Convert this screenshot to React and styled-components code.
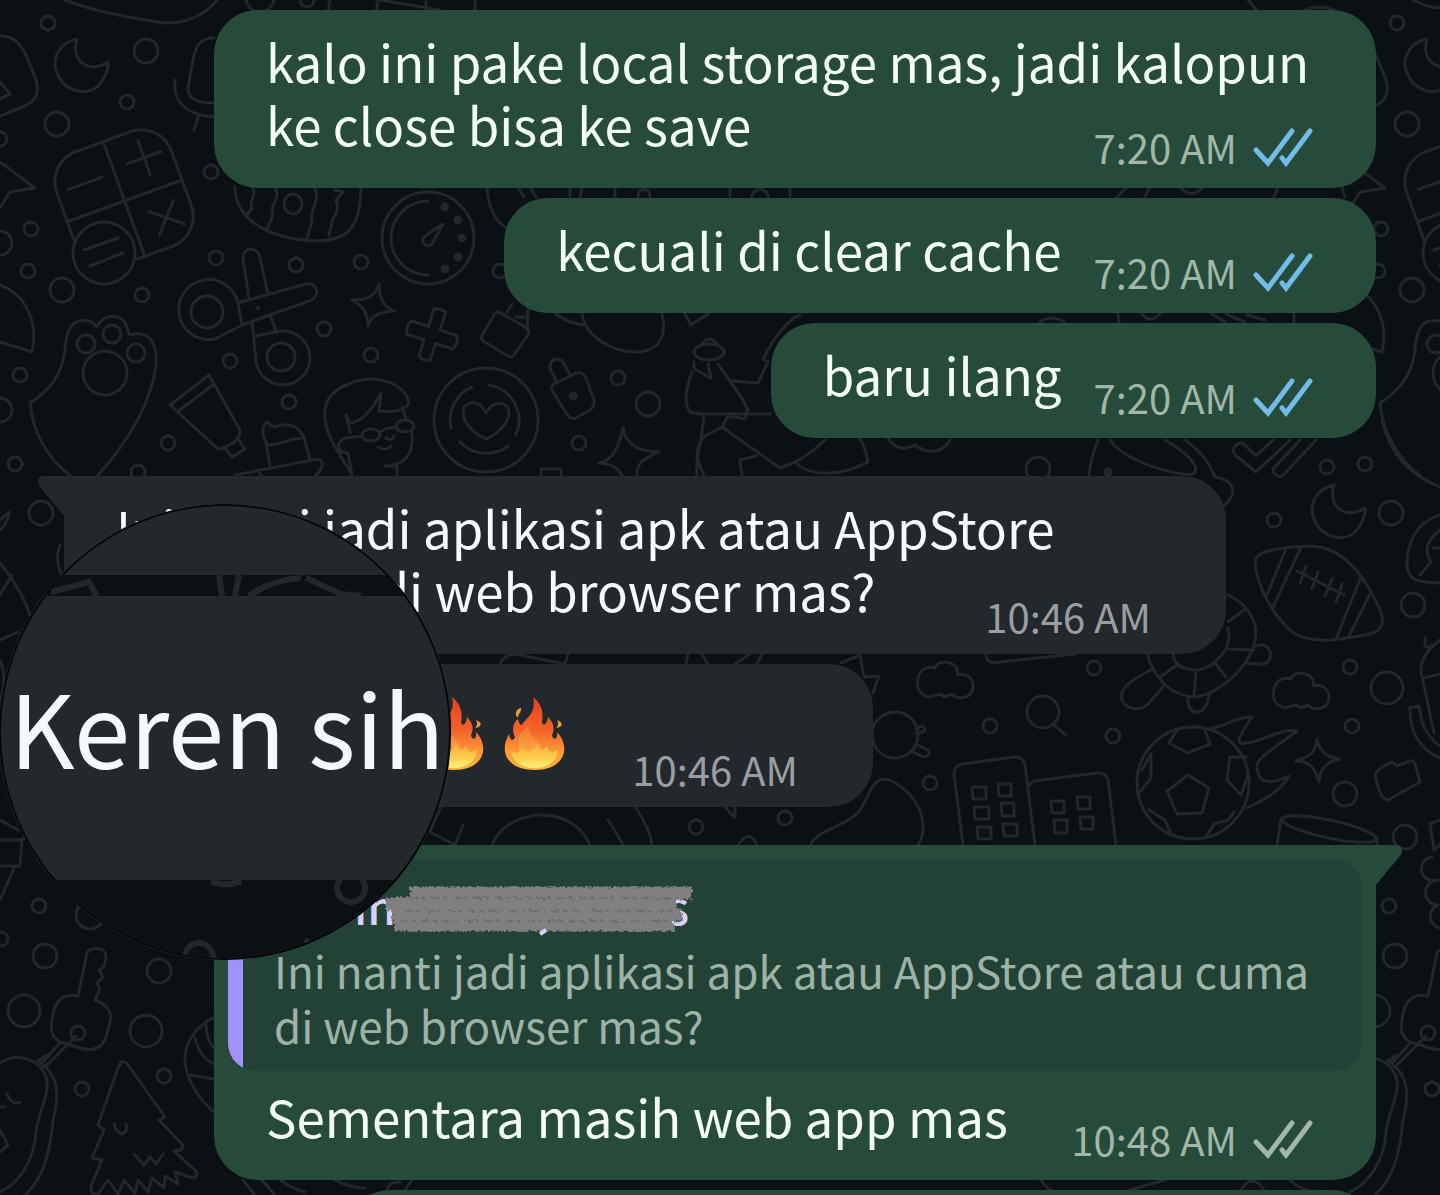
import React from "react";
import styled, { createGlobalStyle, css } from "styled-components";

const GlobalStyle = createGlobalStyle`
  * {
    box-sizing: border-box;
  }
  body {
    margin: 0;
    background: #0b1014;
    font-family: "Noto Sans CJK SC", "Noto Sans", sans-serif;
  }
`;

const Chat = styled.main`
  position: relative;
  height: 100vh;
  overflow: hidden;
  background: #0b1014;
`;

const Wallpaper = styled.svg`
  position: absolute;
  inset: 0;
  width: 100%;
  height: 100%;
  fill: none;
  stroke: #22272b;
  stroke-width: 3;
  stroke-linecap: round;
  stroke-linejoin: round;
`;

const Messages = styled.div`
  position: relative;
  display: flex;
  flex-direction: column;
  gap: 38px;
  padding: 10px 64px;
`;

const Group = styled.section`
  display: flex;
  flex-direction: column;
  align-items: ${(props) => (props.$mine ? "flex-end" : "flex-start")};
  gap: 10px;
`;

const Bubble = styled.article`
  position: relative;
  width: ${(props) => (props.$wide ? "1162px" : "auto")};
  max-width: 100%;
  border-radius: 44px;
  color: #f4fff8;
  background: #264b3a;

  ${(props) =>
    props.$incoming &&
    css`
      color: #f7faff;
      background: #23282c;
    `}
  ${(props) => props.$tail === "left" && "border-top-left-radius: 0;"}
  ${(props) => props.$tail === "right" && "border-top-right-radius: 0;"}
`;

// only the top edge of this one is in view
const NextBubble = styled(Bubble)`
  width: 1030px;
  height: 116px;
`;

const Tail = styled.svg`
  position: absolute;
  top: 0;
  width: 27px;
  height: 41px;
  ${(props) =>
    props.$side === "left"
      ? "right: 100%; margin-right: -1px; fill: #23282c;"
      : "left: 100%; margin-left: -1px; fill: #264b3a;"}
`;

const Body = styled.div`
  display: flex;
  flex-direction: column;
  align-items: flex-start;
  padding: ${(props) => (props.$incoming ? "20px 75px 18px 52px" : "20px 63px 21px 52px")};
  ${(props) => props.$afterQuote && "padding-top: 14px;"}
`;

const Line = styled.span`
  font-size: 51px;
  line-height: 63px;
  white-space: nowrap;
`;

const LastRow = styled.div`
  align-self: stretch;
  display: flex;
  align-items: flex-end;
  justify-content: space-between;
  gap: 32px;

  > ${Line} {
    margin-bottom: ${(props) => (props.$incoming ? 14 : 11)}px;
  }
`;

const Meta = styled.div`
  display: flex;
  align-items: center;
  gap: 16px;
  font-size: 40px;
  line-height: 40px;
  white-space: nowrap;
  color: ${(props) => (props.$incoming ? "#9b9ea1" : "#a2b6aa")};
`;

const Ticks = styled.svg`
  width: 60px;
  height: 40px;
  fill: none;
  stroke: ${(props) => (props.$read ? "#74bce8" : "#a2b6aa")};
  stroke-width: 5;
  stroke-linecap: round;
`;

const Fires = styled.div`
  flex: 1;
  display: flex;
  justify-content: flex-end;
  align-items: center;
  gap: 20px;
  height: 105px;
  padding: 0 35px 8px 0;
`;

const FireIcon = styled.svg`
  width: 61px;
  height: 74px;
`;

const Quote = styled.blockquote`
  margin: 0 14px;
  padding: 24px 28px 18px 46px;
  border-radius: 28px;
  background: linear-gradient(to right, #a391fb 15px, #234236 15px);
  color: #9db3a7;
  font-size: 44px;
  line-height: 55px;
  white-space: nowrap;
`;

const QuotedMessage = styled.div`
  padding-top: 14px;
`;

const QuoteName = styled.div`
  position: relative;
  display: flex;
  justify-content: space-between;
  width: 335px;
  margin: 0 0 15px 80px;
  font-size: 46px;
  font-weight: 500;
  line-height: 45px;
  color: #d9d0ff;
`;

const Scribble = styled.svg`
  position: absolute;
  left: 26px;
  top: -4px;
  width: 316px;
  height: 60px;
  fill: none;
  stroke: #808080;
`;

const QuoteText = styled.p`
  margin: 0;
`;

const LensRow = styled.div`
  position: relative;
  z-index: 1;
  display: flex;
  width: 809px;
  max-width: 100%;

  > article {
    flex: 1;
  }
`;

const Lens = styled.div`
  position: absolute;
  left: -65px;
  top: -160px;
  display: flex;
  align-items: center;
  justify-content: center;
  width: 452px;
  height: 456px;
  border: 2px solid #050709;
  border-radius: 50%;
  overflow: hidden;
  background: #23282c;
  box-shadow: 0 0 1px #50565b;
`;

const LensArt = styled.svg`
  position: absolute;
  inset: 0;
  width: 448px;
  height: 452px;
  fill: none;
  stroke: #22272b;
  stroke-width: 6;
`;

const LensText = styled.span`
  position: relative;
  padding: 0 0 14px 4px;
  font-size: 101px;
  line-height: 120px;
  white-space: nowrap;
  color: #f5f8fd;
`;

const dots = [
  // small rings
  [48, 23, 7], [127, 102, 7], [211, 172, 7], [216, 258, 7], [296, 265, 7],
  [361, 262, 7], [31, 229, 7], [28, 271, 7], [142, 295, 7], [324, 329, 7],
  [230, 361, 7], [371, 355, 7], [289, 402, 7], [20, 375, 7], [168, 443, 7],
  [15, 464, 7], [138, 472, 7], [0, 139, 7], [307, 0, 7], [500, 271, 7],
  [618, 378, 7], [579, 443, 7], [1274, 520, 7], [1327, 467, 7], [1365, 464, 7],
  [1350, 667, 7], [1352, 726, 7], [1094, 668, 7], [990, 726, 7], [1113, 736, 7],
  [930, 783, 7], [696, 827, 7], [785, 818, 7], [39, 906, 7], [1, 939, 7],
  [82, 1089, 7], [164, 1076, 7], [1389, 906, 7], [1432, 1089, 7],
  // larger rings
  [146, 51, 12], [57, 124, 12], [62, 290, 12], [0, 243, 12], [0, 410, 12],
  [260, -2, 14], [648, 404, 12], [41, 513, 12], [1038, 469, 12],
  [1391, 513, 12], [1413, 605, 12], [1387, 688, 16], [1345, 794, 12],
  [1405, 837, 12], [45, 956, 12], [159, 971, 12],
  [24, 1011, 16], [146, 1031, 16], [90, 915, 14], [1395, 956, 12],
  [1374, 1011, 16],
];

const Moon = (props) => (
  <path
    d="M77 39C60 42 52 58 56 70C62 91 86 98 99 85C105 78 109 68 108 62C90 74 70 62 77 39Z"
    {...props}
  />
);

const LeftDoodles = (props) => (
  <g {...props}>
    <Moon />
    <path d="M0 36C15 36 22 45 28 60L36 80C40 95 35 102 22 107L0 116M0 82L10 94L0 99" />
    <path d="M0 162L35 188L10 192L0 208" />
    <g transform="translate(124 199) rotate(-20)">
      <rect x="-61" y="-61" width="122" height="122" rx="32" />
      <path d="M0-61V61M-61 2H61M-49-28H-13M15-32H51M33-50V-14M19 20L48 44M46 18L21 46" />
    </g>
    <circle cx="104" cy="253" r="31" fill="#0b1014" />
    <path d="M84 250L118 238M90 266L123 253" />
    <path d="M0 285C20 292 40 316 32 352L0 342" />
    <path d="M30 403C50 390 62 375 65 350C66 330 72 318 88 321C96 322 95 329 98 325C104 315 120 312 126 325C130 332 126 336 134 334C150 332 158 345 156 365C152 400 130 440 98 475M30 403C32 430 48 460 70 475" />
    <circle cx="86" cy="344" r="9" />
    <circle cx="112" cy="334" r="9" />
    <circle cx="136" cy="353" r="9" />
    <circle cx="105" cy="373" r="22" />
  </g>
);

const KeyDoodles = (props) => (
  <g {...props}>
    <path d="M78 996L87 953C90 946 107 947 106 958L104 967L99 970L103 977L97 983L100 989L95 1000C106 1004 113 1012 110 1022L106 1037C102 1050 90 1051 80 1048L60 1042C50 1036 50 1028 53 1014C56 999 65 993 78 996Z" />
    <circle cx="78" cy="1033" r="7" />
    <path d="M76 1036L45 1067L38 1060M60 1043L43 1062M38 1062L46 1055" />
    <path d="M0 1063C14 1054 34 1056 44 1072C54 1090 38 1110 36 1132C34 1162 18 1184 0 1192M46 1067C60 1082 58 1100 53 1120C50 1150 45 1177 25 1195M7 1094Q12 1106 20 1102M0 1130L8 1145L0 1152M0 1107H5" />
  </g>
);

const Doodles = () => (
  <Wallpaper
    viewBox="0 0 1440 1195"
    preserveAspectRatio="xMidYMin slice"
    aria-hidden="true"
  >
    {dots.map(([x, y, r], index) => (
      <circle key={index} cx={x} cy={y} r={r} />
    ))}
    <LeftDoodles />
    <LeftDoodles transform="translate(1350 0)" />
    <circle cx="1397" cy="23" r="7" />
    <circle cx="1407" cy="124" r="12" />
    <circle cx="1412" cy="290" r="12" />
    <circle cx="1381" cy="229" r="7" />
    <circle cx="1378" cy="271" r="7" />

    {/* top edge */}
    <path d="M65 0C90 10 130 18 165 23C185 24 205 15 217 0M330 0L328 12M378 0L376 12M380 0L440 10M426 0V10M475 0V10" />
    <path d="M1413 0Q1428 8 1440 8M1248 0L1258 12M1305 10Q1318 4 1334 10" />
    {/* microphone */}
    <path d="M214 38C200 38 196 45 193 60L188 88C188 98 195 103 214 103M175 80C172 100 185 115 214 117M198 117L194 130" />
    {/* painted egg */}
    <path d="M235 187C235 215 260 232 290 238C310 242 335 243 348 232C358 222 361 205 361 187M252 187C258 195 248 200 252 208L246 216M275 187C282 200 268 205 273 215L267 230M314 187C322 200 308 210 312 222L307 238M335 190L343 192L336 200Q340 210 333 218L329 235" />
    <ellipse cx="293" cy="204" rx="9" ry="10" />
    {/* timer */}
    <circle cx="428" cy="238" r="46" />
    <path d="M428 201A37 37 0 0 0 428 275M443 224L425 236C419 242 426 249 432 244Z" />
    <g fill="#22272b" strokeWidth="1">
      <circle cx="445" cy="207" r="4" />
      <circle cx="458" cy="220" r="4" />
      <circle cx="462" cy="238" r="4" />
      <circle cx="458" cy="257" r="4" />
      <circle cx="445" cy="269" r="4" />
    </g>
    <path d="M487 187C488 205 493 222 510 230M518 187L524 197M530 187L536 197M570 187V197M582 187L580 197M615 187V197M638 197C638 187 650 187 650 197M730 187V197M752 197C752 187 768 187 768 197M790 187V197M1117 197L1127 187M1145 197L1150 187M1180 187Q1192 200 1203 187M1274 197L1278 187M1342 187L1345 197" />
    <path d="M1040 322Q1052 314 1064 322M1118 314L1119 322M1142 314Q1150 324 1160 314M1212 314L1225 322M1226 314L1245 322M1247 315L1265 320M1294 314V322" />
    {/* scissors */}
    <circle cx="207" cy="312" r="16" />
    <path d="M238 303A30 30 0 1 0 215 339L242 325ZM238 303L306 284C318 282 321 297 309 301L242 325M249 299L243 258C243 246 258 246 260 258L268 294M252 323L256 360A27 27 0 1 0 281 331L255 336M271 317L276 331M258 307V309" />
    <circle cx="281" cy="357" r="14" />
    {/* sparkle and plus */}
    <path d="M379 284C379 300 385 308 395 311C380 312 371 315 368 326C368 312 362 305 352 300C368 300 376 296 379 284Z" />
    <path
      transform="translate(432 335) rotate(18)"
      d="M-6-26Q0-28 6-26V-7H24Q28 0 24 7H6V24Q0 28-6 24V7H-24Q-28 0-24-7H-6Z"
    />
    {/* tube and cake */}
    <path d="M170 405L209 375L240 430C240 440 232 446 218 449ZM177 412L213 385M239 440L245 449L232 457L225 448" />
    <path d="M268 445C260 433 262 425 268 422Q272 429 278 426C290 422 300 428 304 438C290 438 280 445 268 445ZM266 443L270 467M304 438L310 460M235 475L318 459C325 461 322 470 316 475M258 470L261 475" />
    {/* boy with glasses */}
    <path d="M352 475C338 450 320 430 326 405C332 385 365 375 385 381C400 385 408 395 409 403C405 412 390 412 379 411L381 393C372 410 362 422 350 423L346 415L350 432M402 408L406 418M361 436L345 438C335 443 338 453 348 453L352 475M412 432C414 455 405 465 385 466L397 466V475M378 447Q385 452 391 446M386 438Q392 442 394 436M380 432C385 428 392 427 396 428" />
    <ellipse cx="371" cy="435" rx="9" ry="6" />
    <ellipse cx="405" cy="426" rx="9" ry="6" />
    {/* heart coin */}
    <circle cx="486" cy="420" r="52" />
    <path d="M486 439C475 434 463 424 463 412C464 400 480 399 486 413C494 399 509 401 509 414C508 424 496 435 486 439ZM472 387A36 36 0 0 0 451 428M489 385A36 36 0 0 1 516 435M460 442A36 36 0 0 0 508 446" />
    {/* padlocks */}
    <path d="M499 312L527 328Q530 331 528 335L514 355Q511 358 508 356L483 341Q480 338 483 334L495 313ZM507 312L512 304M516 317L527 317L529 305M527 330L528 312" />
    <path d="M554 384L576 373Q582 371 586 378L594 400Q595 408 588 411L576 418Q570 420 566 413L553 392Q550 387 554 384ZM556 381L550 368C550 357 562 357 564 364L570 375" />
    <circle cx="573" cy="396" r="3" fill="#22272b" />
    <path d="M623 427C625 445 640 452 659 452C645 458 636 463 637 475M623 427C620 445 612 462 599 463C612 464 618 468 622 475M541 475V469H561V475" />
    <path d="M582 314C585 335 610 353 640 352C660 350 667 335 662 314M556 314Q570 324 583 325M685 314L691 325L708 314" />
    {/* runner with bobble hat */}
    <ellipse cx="709" cy="352" rx="15" ry="8" />
    <path d="M702 344Q710 334 718 345M694 362C692 372 702 372 711 378L708 364M692 372C685 390 684 405 690 412C700 416 725 413 745 414C752 410 740 395 718 364M733 381L758 383L768 362L763 359C775 335 790 318 800 315M704 415L701 440C697 455 696 465 697 475M704 475Q690 450 705 436L722 427M722 427L780 468C800 462 815 450 825 440M722 427L728 416L745 419L748 410M745 414H770M742 475L740 460L757 456M797 464C810 476 840 477 868 462Q866 450 860 438M888 438C895 450 905 450 915 445C930 457 945 450 950 440" />
    {/* bowl, ticks and moon on the right */}
    <path d="M1098 440C1092 455 1090 465 1089 475M1110 440C1120 455 1150 470 1190 475C1202 472 1196 458 1165 440M1185 440C1205 455 1210 465 1215 477C1232 480 1240 490 1225 505" />
    <circle cx="1108" cy="472" r="3" fill="#22272b" />
    <path d="M1273 440L1256 456L1243 443C1235 443 1231 450 1235 455L1256 472L1290 440M1300 440L1273 469C1274 478 1282 478 1286 472L1316 440" />
    <Moon transform="translate(1257 446)" />
    <path d="M1382 420C1390 455 1410 475 1440 487" />
    {/* football */}
    <path d="M1255 562C1255 552 1272 548 1308 546C1345 546 1365 577 1381 612C1385 625 1380 631 1370 634C1340 640 1312 645 1292 632C1270 612 1257 585 1255 562ZM1286 549L1266 597M1301 547L1273 607M1361 577L1336 639M1371 592L1348 638M1297 571L1344 595M1306 566L1300 583M1318 572L1312 589M1332 579L1325 596M1342 584L1336 602" />
    <path d="M1440 515C1418 522 1407 540 1407 565C1408 582 1420 582 1440 583M1440 530Q1420 545 1431 562L1420 575M1433 548H1440" />
    {/* turtle */}
    <path d="M1228 595C1250 605 1260 625 1254 645C1246 670 1220 692 1197 697C1172 697 1155 680 1147 654M1228 628C1234 650 1212 668 1198 670C1182 670 1174 665 1173 654M1228 622L1244 610M1228 649L1254 650M1214 662L1226 677M1196 670L1194 697M1177 665L1159 678M1151 670C1130 680 1118 690 1122 700C1128 712 1142 710 1148 704L1163 687M1188 697C1186 718 1208 718 1209 693M1256 646C1275 640 1274 667 1260 664L1247 663" />
    {/* magnifier and clouds */}
    <circle cx="1043" cy="712" r="16" />
    <path d="M1053 724L1066 735" />
    <path
      id="cloud"
      d="M929 697C918 695 915 685 919 675C922 668 929 666 935 668C937 660 952 660 957 669L958 675C967 672 974 680 973 687C972 698 959 701 952 694L945 697L940 694Z"
    />
    <use href="#cloud" x="356" y="11" />
    <path d="M986 654Q986 665 1000 662L1075 654M841 663L860 655L864 677L879 676L873 693" />
    <circle cx="895" cy="735" r="23" />
    <path d="M916 729L922 726Q928 730 922 732L916 733M915 744L928 750Q931 757 923 757L911 751" />
    <path d="M811 845C815 830 850 825 860 810C870 795 872 775 890 780C925 798 928 830 918 845" />
    {/* buildings */}
    <path d="M963 845L954 774Q954 766 962 764L1015 757Q1023 757 1025 765L1035 845M1029 785L1034 781L1097 773Q1106 772 1108 780L1116 845" />
    <path d="M972 787H986V799H973ZM998 784H1011V796H999ZM974 807H989V819H975ZM1001 803H1014V816H1002ZM977 827H991V839H978ZM1003 824H1017V836H1004ZM1051 801H1064V813H1052ZM1077 797H1090V809H1078ZM1054 820H1067V833H1055ZM1080 817H1093V829H1081Z" />
    {/* flaming ball */}
    <circle cx="1193" cy="783" r="56" />
    <path d="M1188 775L1209 788L1202 813L1177 814L1167 791ZM1177 730L1169 743L1188 753L1210 744L1205 731M1151 754V778L1140 792M1151 754L1142 770M1246 757L1230 757L1227 780L1241 795L1248 775M1149 810L1165 820L1171 834M1234 812L1228 820L1214 824L1206 837" />
    <path d="M1207 729C1225 728 1235 716 1252 717C1242 732 1232 746 1246 743C1262 742 1280 728 1297 731C1280 745 1255 758 1257 767C1258 785 1272 784 1289 776C1282 790 1265 800 1247 808" />
    <path d="M1317 739C1320 755 1330 757 1340 759C1325 762 1320 770 1319 782C1315 768 1310 761 1296 761C1312 756 1315 752 1317 739Z" />
    <path d="M1375 776Q1376 768 1392 762L1397 766L1410 761Q1413 760 1415 764L1420 782L1388 800Q1382 800 1378 787Z" />
    <ellipse cx="1329" cy="829" rx="48" ry="9" transform="rotate(12 1329 829)" />
    <path d="M1281 819L1277 845M1377 838V845M1425 638V645Q1427 650 1432 645M1440 640Q1420 655 1421 672L1434 733M1424 678L1440 674M1409 708L1419 706L1422 722Q1428 738 1440 746M1410 710Q1410 745 1440 758M1440 820L1430 824L1434 850L1440 845" />
    <path d="M1432 857A12 12 0 1 0 1438 880A12 12 0 1 0 1438 905A12 12 0 0 0 1440 928" />
    {/* strip above the quoted message */}
    <path d="M441 807L430 832L455 845L463 825M492 845C505 810 570 800 590 845M608 820Q618 835 623 845M635 807Q650 828 652 845M725 807L735 818V807M738 845Q750 828 757 845M500 664Q505 652 520 655L565 664L568 654M686 664L688 654M702 654L708 664M735 664L750 654M757 664L762 654" />
    {/* left edge */}
    <path d="M0 520L9 512Q8 524 0 530M0 563Q22 590 30 615M0 595L12 575M0 640L18 632M60 545Q54 560 62 575M0 660Q8 680 0 700M0 840H22L26 835M22 840L20 866H0M14 868L0 900M0 820L18 830" />
    <KeyDoodles />
    <KeyDoodles transform="translate(1350 0)" />
    {/* pine tree and ball */}
    <path d="M121 1062Q124 1060 128 1065L165 1117L159 1120L183 1145L181 1150L174 1151L197 1172Q197 1180 190 1177L175 1172L178 1184L165 1176L164 1188L152 1178L148 1192L138 1180L135 1193L124 1180L118 1194L108 1180L98 1194Q88 1195 92 1184L102 1160L92 1158L104 1130L98 1125L118 1068ZM114 1124Q116 1132 122 1134Q128 1132 126 1124M134 1154L144 1165L150 1157L156 1164L163 1154" />
    <path d="M214 1017C190 1030 182 1050 186 1068C190 1085 200 1100 214 1112M206 1024Q206 1040 214 1048M195 1038Q200 1058 214 1064M191 1075L214 1079" />
    <path d="M243 1180L255 1195M262 1180L275 1195M280 1180Q295 1190 305 1192M335 1180Q350 1188 365 1188M387 1195Q385 1182 400 1182M405 1190L412 1180M1041 1180Q1047 1190 1055 1192M1130 1190L1165 1180M1241 1190Q1252 1172 1264 1190M1290 1180Q1300 1190 1315 1192" />
  </Wallpaper>
);

const DoubleTick = ({ read }) => (
  <Ticks
    $read={read}
    viewBox="0 0 60 40"
    role="img"
    aria-label={read ? "Read" : "Delivered"}
  >
    <path d="M3 23L15 36L39 4" />
    <path d="M29 31L33 36L57 4" />
  </Ticks>
);

const Time = ({ children, incoming, read }) => (
  <Meta $incoming={incoming}>
    <time>{children}</time>
    {!incoming && <DoubleTick read={read} />}
  </Meta>
);

const Message = ({ lines, time, incoming, tail }) => {
  const first = lines.slice(0, -1);
  const last = lines[lines.length - 1];

  return (
    <Bubble $incoming={incoming} $wide={lines.length > 1} $tail={tail}>
      {tail === "left" && <LeftTail />}
      <Body $incoming={incoming}>
        {first.map((line) => (
          <Line key={line}>{line}</Line>
        ))}
        <LastRow $incoming={incoming}>
          <Line>{last}</Line>
          <Time incoming={incoming} read>
            {time}
          </Time>
        </LastRow>
      </Body>
    </Bubble>
  );
};

const LeftTail = () => (
  <Tail $side="left" viewBox="0 0 27 41" aria-hidden="true">
    <path d="M27 0H6C0 0-2 6 2 11L27 41Z" />
  </Tail>
);

const RightTail = () => (
  <Tail $side="right" viewBox="0 0 27 41" aria-hidden="true">
    <path d="M0 0H21C27 0 29 6 25 11L0 41Z" />
  </Tail>
);

const Fire = () => (
  <FireIcon viewBox="0 0 61 74" role="img" aria-label="fire">
    <defs>
      <linearGradient id="flame" x1="0" y1="0" x2="0" y2="1">
        <stop offset="0" stopColor="#e8401c" />
        <stop offset="0.45" stopColor="#f4622a" />
        <stop offset="0.75" stopColor="#fb9a35" />
        <stop offset="1" stopColor="#fdb63c" />
      </linearGradient>
      <linearGradient id="middle" x1="0" y1="0" x2="0" y2="1">
        <stop offset="0" stopColor="#f26a2c" />
        <stop offset="1" stopColor="#fdb548" />
      </linearGradient>
      <linearGradient id="core" x1="0" y1="0" x2="0" y2="1">
        <stop offset="0" stopColor="#fba341" />
        <stop offset="0.55" stopColor="#fdc947" />
        <stop offset="1" stopColor="#fff07a" />
      </linearGradient>
    </defs>
    <path
      fill="url(#flame)"
      d="M29 1C37 7 40 16 38 26C39 31 43 29 44 21C50 27 51 33 48 39C49 45 54 44 53 36C59 42 61 50 60 56C58 67 47 74 31 74C14 74 3 67 1 56C0 49 2 43 5 38C6 44 9 46 11 41C7 33 10 26 14 23C15 28 17 31 19 27C27 19 32 13 29 1Z"
    />
    <path
      fill="url(#middle)"
      d="M27 22C22 32 25 38 33 45C40 50 40 57 37 62L24 64C12 54 12 42 19 35C23 32 27 28 27 22Z"
    />
    <path
      fill="url(#core)"
      d="M33 45C34 54 39 58 43 49C44 56 49 58 54 53C54 65 44 72 31 72C18 72 8 66 7 54C12 59 16 58 16 49C20 59 32 57 33 45Z"
    />
    <path
      fill="#f09a32"
      d="M17 12C12 13 10 18 14 22C14 17 18 16 17 12ZM53 24C55 28 54 30 52 32C60 31 59 26 53 24Z"
    />
  </FireIcon>
);

const Magnifier = () => (
  <Lens>
    <LensArt viewBox="0 0 448 452" aria-hidden="true">
      <path d="M0 69H448V90H0ZM0 374H448V452H0Z" fill="#0b1014" stroke="none" />
      <path d="M50 86L88 76L96 90M218 69L221 90M238 69L234 90M248 90Q270 74 300 72M305 72L340 88L360 90" />
      <path d="M210 375Q225 382 240 375" />
      <circle cx="350" cy="382" r="14" />
      <circle cx="198" cy="451" r="14" />
      <path d="M300 446L306 436L314 444" />
    </LensArt>
    <LensText>Keren sih</LensText>
  </Lens>
);

const HiddenName = () => (
  <QuoteName>
    <span>in</span>
    <span>s</span>
    <Scribble viewBox="0 0 316 60" aria-hidden="true">
      <defs>
        <filter id="chalk" x="-5%" y="-20%" width="110%" height="140%">
          <feTurbulence type="fractalNoise" baseFrequency="0.35" numOctaves="2" />
          <feDisplacementMap in="SourceGraphic" scale="7" />
        </filter>
      </defs>
      <g filter="url(#chalk)" strokeWidth="13">
        <path d="M30 14H312" />
        <path d="M6 25H296" />
        <path d="M12 36H302" />
        <path d="M14 46H294" />
      </g>
      <g filter="url(#chalk)" stroke="#5b5f5c" strokeWidth="1">
        <path d="M30 19H290M24 32H296M20 42H290" strokeDasharray="9 3 4 5" />
      </g>
      <path d="M160 55L166 51" stroke="#d9d0ff" strokeWidth="4" />
    </Scribble>
  </QuoteName>
);

const App = () => {
  return (
    <>
      <GlobalStyle />
      <Chat>
        <Doodles />
        <Messages>
          <Group $mine>
            <Message
              time="7:20 AM"
              lines={[
                "kalo ini pake local storage mas, jadi kalopun",
                "ke close bisa ke save",
              ]}
            />
            <Message time="7:20 AM" lines={["kecuali di clear cache"]} />
            <Message time="7:20 AM" lines={["baru ilang"]} />
          </Group>

          <Group>
            <Message
              incoming
              tail="left"
              time="10:46 AM"
              lines={[
                "Ini nanti jadi aplikasi apk atau AppStore",
                "atau cuma di web browser mas?",
              ]}
            />
            <LensRow>
              <Bubble $incoming>
                <Body $incoming>
                  <LastRow $incoming>
                    <Fires>
                      <Fire />
                      <Fire />
                    </Fires>
                    <Time incoming>10:46 AM</Time>
                  </LastRow>
                </Body>
              </Bubble>
              <Magnifier />
            </LensRow>
          </Group>

          <Group $mine>
            <Bubble $wide $tail="right">
              <RightTail />
              <QuotedMessage>
                <Quote>
                  <HiddenName />
                  <QuoteText>
                    Ini nanti jadi aplikasi apk atau AppStore atau cuma
                    <br />
                    di web browser mas?
                  </QuoteText>
                </Quote>
              </QuotedMessage>
              <Body $afterQuote>
                <LastRow>
                  <Line>Sementara masih web app mas</Line>
                  <Time>10:48 AM</Time>
                </LastRow>
              </Body>
            </Bubble>
            <NextBubble />
          </Group>
        </Messages>
      </Chat>
    </>
  );
};

export default App;
